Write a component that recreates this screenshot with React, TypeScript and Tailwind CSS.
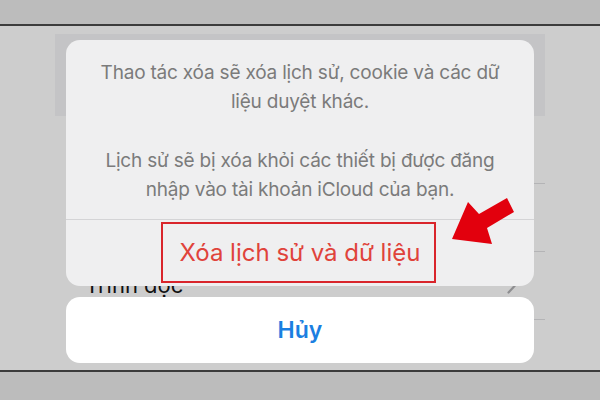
import React from 'react';

const font = { fontFamily: 'Inter, "Noto Sans", "Liberation Sans", sans-serif' };

function ListRow({ label, chevron }: { label?: string; chevron?: boolean }) {
  return (
    <div className="ml-[30px] flex h-[68px] shrink-0 items-center justify-between border-b border-[#b4b4b6] pr-[28px]">
      <span className="text-[22px] text-[#111111]">{label}</span>
      {chevron ? (
        <svg width="10" height="17" viewBox="0 0 10 17" fill="none">
          <path d="M1.5 1.5 L8 8.5 L1.5 15.5" stroke="#8e8e90" strokeWidth="2.2" strokeLinecap="round" strokeLinejoin="round" />
        </svg>
      ) : null}
    </div>
  );
}

function Arrow() {
  return (
    <svg className="absolute left-0 top-0" width="600" height="400" viewBox="0 0 600 400">
      <polygon
        points="452,239 468,202 479,214 507,198 514,212 487,228 492,244"
        fill="#e2000d"
      />
    </svg>
  );
}

export default function App() {
  return (
    <div className="relative flex h-[400px] w-[600px] flex-col overflow-hidden bg-[#bcbcbc]" style={font}>
      <div className="h-[24px] shrink-0 bg-[#bcbcbc]" />
      <div className="h-[2px] shrink-0 bg-[#3c3c3c]" />
      <div className="min-h-0 flex-1 overflow-hidden bg-[#cdcdcd] px-[55px] pt-[8px]">
        <div className="flex flex-col">
          <div className="h-[82px] shrink-0 bg-[#c4c4c6]" />
          <ListRow />
          <ListRow />
          <ListRow label="Trình đọc" chevron />
          <ListRow />
        </div>
      </div>
      <div className="h-[2px] shrink-0 bg-[#3c3c3c]" />
      <div className="h-[28px] shrink-0 bg-[#bcbcbc]" />

      <div className="absolute left-[66px] top-[40px] flex w-[468px] flex-col gap-[11px]">
        <div className="flex flex-col rounded-[14px] bg-[#efeff0]">
          <div className="flex flex-col gap-[31px] border-b border-[#d4d4d6] px-[30px] pb-[15px] pt-[19px] text-center text-[19px] leading-[28.5px] tracking-[-0.2px] text-[#7b7b7b]">
            <p>Thao tác xóa sẽ xóa lịch sử, cookie và các dữ liệu duyệt khác.</p>
            <p>Lịch sử sẽ bị xóa khỏi các thiết bị được đăng nhập vào tài khoản iCloud của bạn.</p>
          </div>
          <div className="flex h-[66px] items-center justify-center text-[24px] text-[#e0433b]">
            Xóa lịch sử và dữ liệu
          </div>
        </div>
        <div className="flex h-[66px] items-center justify-center rounded-[14px] bg-white text-[23px] font-semibold text-[#1b7fe1]">
          Hủy
        </div>
      </div>

      <div className="absolute left-[161px] top-[222px] h-[61px] w-[275px] border-2 border-[#d9252b]" />
      <Arrow />
    </div>
  );
}
